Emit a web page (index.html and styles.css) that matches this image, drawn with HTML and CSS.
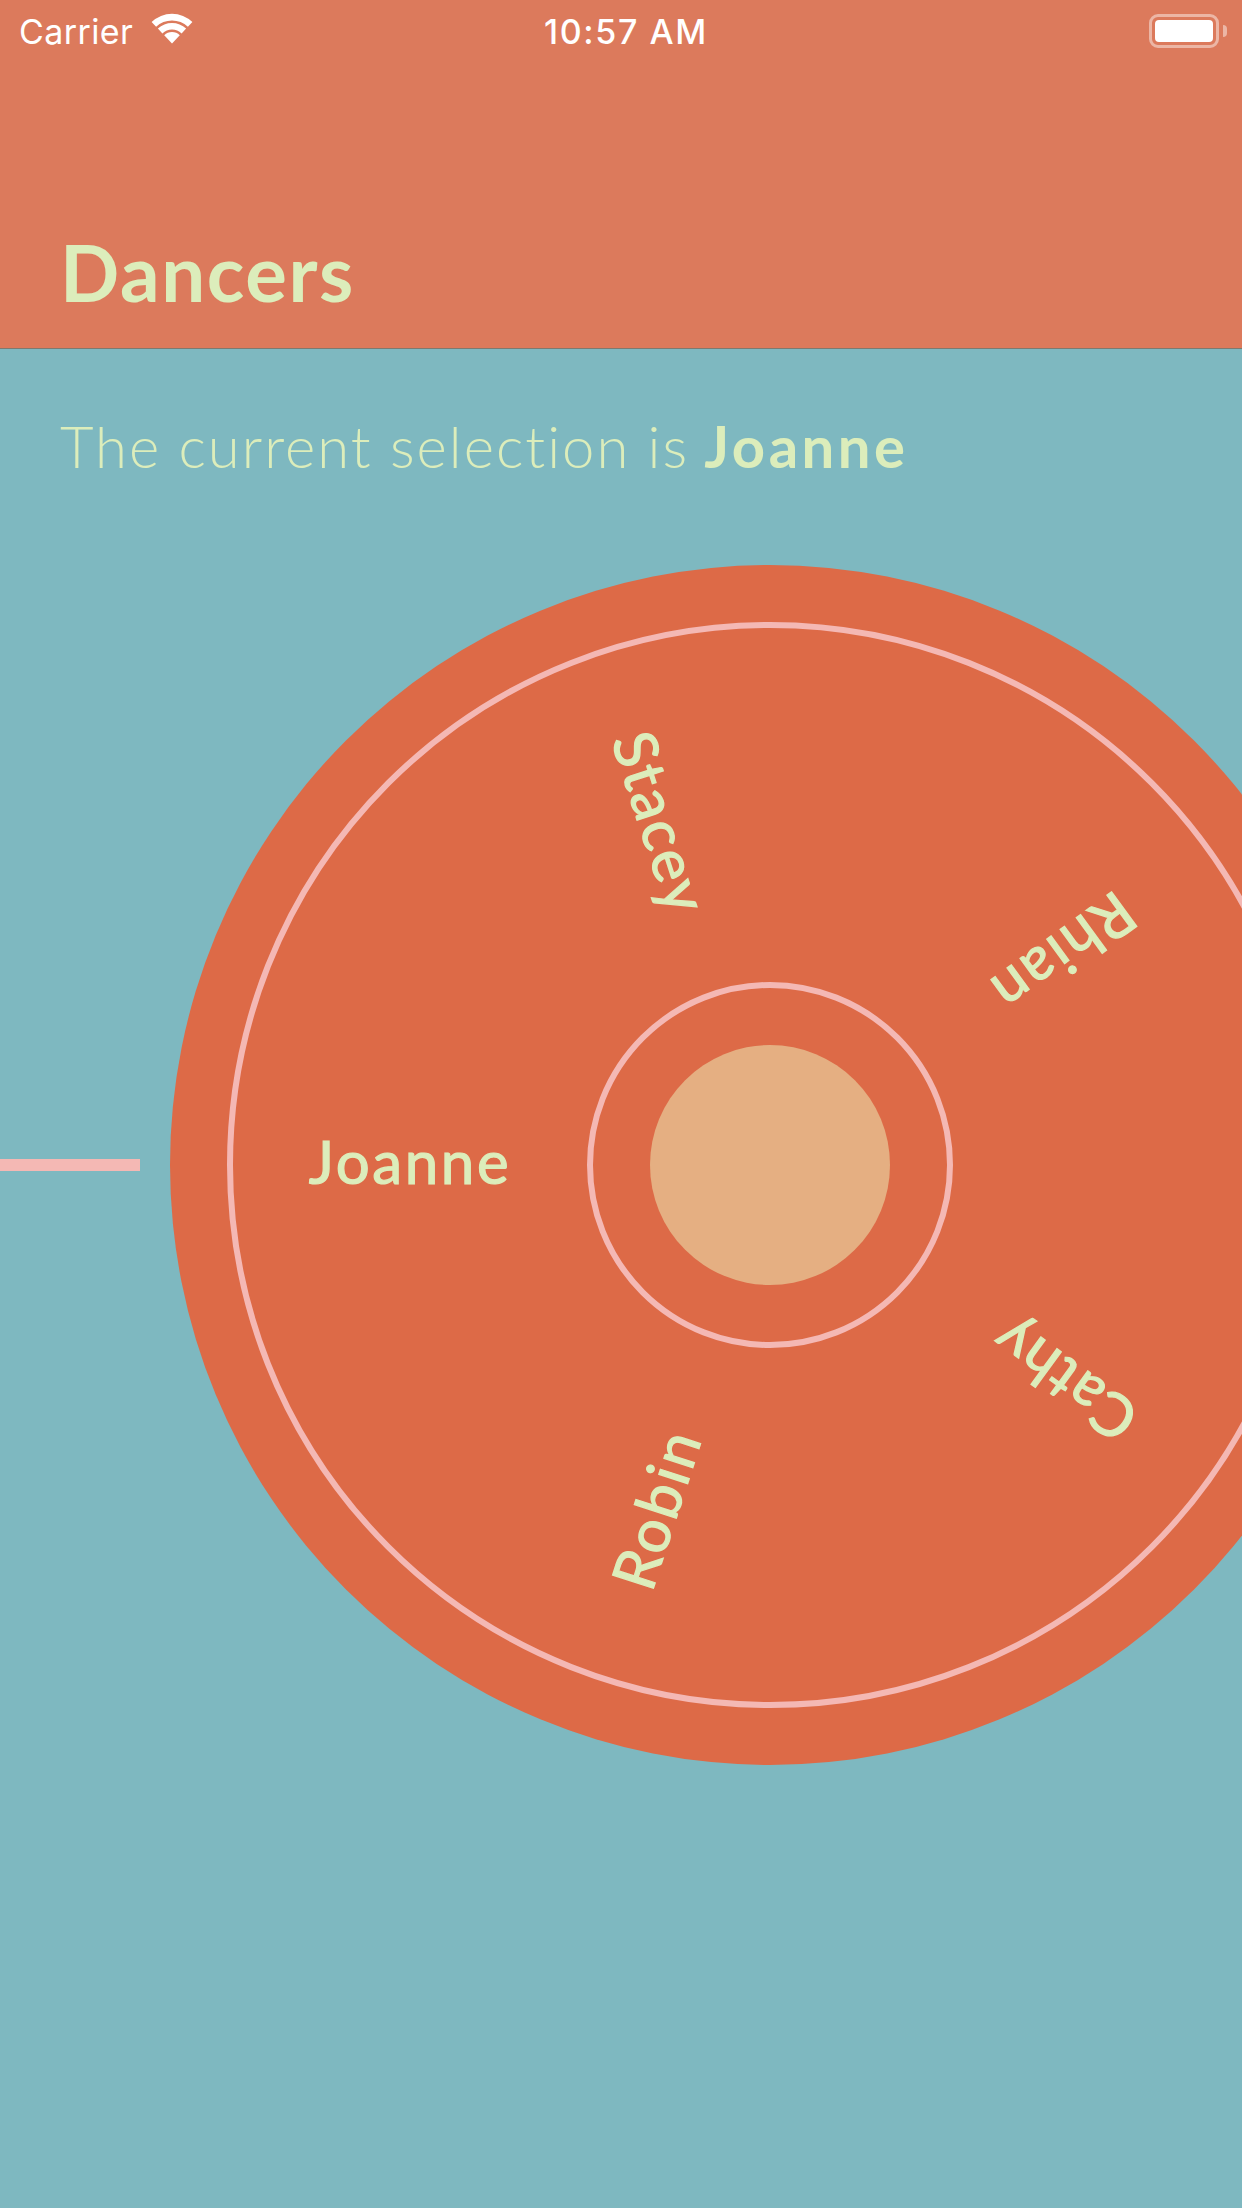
FILE: index.html
```html
<!DOCTYPE html>
<html lang="en">
<head>
<meta charset="utf-8">
<title>Dancers</title>
<link rel="stylesheet" href="styles.css">
</head>
<body>
<div class="app">
  <header class="nav">
    <div class="status">
      <div class="status-left">
        <span class="carrier">Carrier</span>
        <svg class="wifi" width="42" height="31" viewBox="0 0 42 31">
          <path class="wifi-fill" d="M21 30.5 L13.2 22.2 A11 11 0 0 1 28.8 22.2 Z"/>
          <path class="wifi-fill" d="M6.9 15.6 A20.5 20.5 0 0 1 35.1 15.6 L30.6 20.4 A14 14 0 0 0 11.4 20.4 Z"/>
          <path class="wifi-fill" d="M0.6 9 A29.5 29.5 0 0 1 41.4 9 L36.9 13.8 A23 23 0 0 0 5.1 13.8 Z"/>
        </svg>
      </div>
      <span class="time">10:57 AM</span>
      <div class="battery">
        <div class="battery-body"><div class="battery-level"></div></div>
        <div class="battery-nub"></div>
      </div>
    </div>
    <h1 class="title">Dancers</h1>
  </header>
  <main class="content">
    <p class="selection">The current selection is <strong>Joanne</strong></p>
    <div class="stage">
      <div class="tick"></div>
      <div class="wheel">
        <div class="ring ring-outer"></div>
        <div class="ring ring-inner"></div>
        <div class="hub"></div>
        <span class="name name-joanne">Joanne</span>
        <span class="name name-stacey">Stacey</span>
        <span class="name name-rhian">Rhian</span>
        <span class="name name-cathy">Cathy</span>
        <span class="name name-robin">Robin</span>
      </div>
    </div>
  </main>
</div>
</body>
</html>
```

FILE: styles.css
```css
* { box-sizing: border-box; margin: 0; padding: 0; }
html, body { width: 1242px; height: 2208px; overflow: hidden; }
body { font-family: "Lato", "Open Sans", sans-serif; background: #7eb8c0; }
.app { width: 1242px; height: 2208px; display: flex; flex-direction: column; overflow: hidden; }

.nav {
  height: 349px;
  background: #dc7a5c;
  border-bottom: 1px solid #7d7a70;
  padding-top: 11px;
  flex-shrink: 0;
}
.status {
  height: 42px;
  display: grid;
  grid-template-columns: 1fr auto 1fr;
  align-items: center;
  color: #fff;
  font-family: "Inter", "Liberation Sans", sans-serif;
}
.status-left { display: flex; align-items: center; gap: 18px; padding-left: 19px; }
.carrier { font-size: 34px; font-weight: 400; line-height: 42px; letter-spacing: 0.4px; }
.wifi { display: block; margin-top: -7px; }
.wifi-fill { fill: #fff; }
.time { font-size: 34px; font-weight: 500; line-height: 42px; letter-spacing: 1.6px; padding-left: 10px; }
.battery { justify-self: end; display: flex; align-items: center; gap: 4px; padding-right: 15px; margin-top: -2px; }
.battery-body {
  width: 70px; height: 34px;
  border: 3px solid rgba(255,255,255,.45);
  border-radius: 9px;
  padding: 3px;
}
.battery-level { width: 100%; height: 100%; background: #fff; border-radius: 4px; }
.battery-nub { width: 4px; height: 12px; background: rgba(255,255,255,.45); border-radius: 0 4px 4px 0; }

.title {
  margin-top: 173px;
  padding-left: 60px;
  font-size: 78px;
  font-weight: 700;
  line-height: 92px;
  letter-spacing: 1.6px;
  color: #dcedbb;
}

.content { flex: 1; min-height: 0; color: #dcedbb; }
.selection {
  margin-top: 62px;
  padding-left: 60px;
  font-size: 58px;
  font-weight: 300;
  line-height: 70px;
  letter-spacing: 2px;
  word-spacing: -0.5px;
}
.selection strong { font-weight: 700; letter-spacing: 3.5px; margin-left: -2px; }

.stage { margin-top: 84px; display: flex; align-items: center; gap: 30px; }
.tick { width: 140px; height: 12px; background: #f4b8b4; flex-shrink: 0; }
.wheel {
  position: relative;
  width: 1200px; height: 1200px;
  flex-shrink: 0;
  border-radius: 50%;
  background: #dd6a47;
  display: grid;
  place-items: center;
}
.wheel > * { grid-area: 1 / 1; }
.ring { border-radius: 50%; border: 6px solid #f4b8b4; }
.ring-outer { width: 1086px; height: 1086px; }
.ring-inner { width: 366px; height: 366px; }
.hub { width: 240px; height: 240px; border-radius: 50%; background: #e5af82; }

.name {
  font-size: 60px;
  font-weight: 400;
  line-height: 70px;
  letter-spacing: 2.6px;
  white-space: nowrap;
  -webkit-text-stroke: 1.2px #dcedbb;
}
.name-joanne { transform: translate(-360px, -4px); }
.name-stacey { transform: rotate(72deg) translate(-359px, -3px); }
.name-rhian { transform: rotate(144deg) translate(-362px, -3px); }
.name-cathy { transform: rotate(216deg) translate(-364px, -3px); letter-spacing: 1.6px; }
.name-robin { transform: rotate(288deg) translate(-362px, -3px); }
```
